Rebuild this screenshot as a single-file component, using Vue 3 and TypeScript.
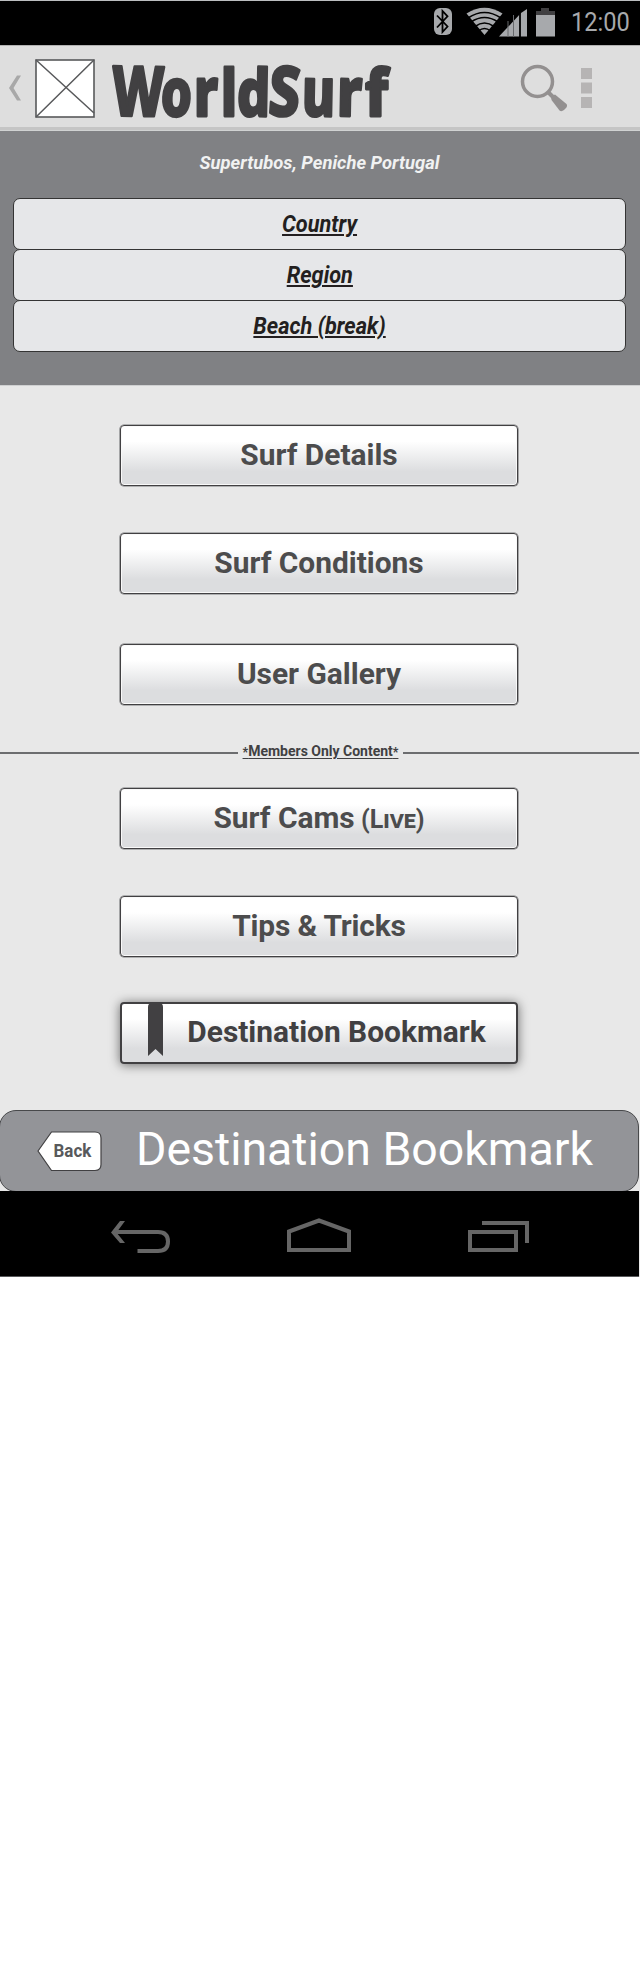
<script setup lang="ts">
interface Action { label: string; note?: string; cls: string; mark?: boolean }

const filters = ['Country', 'Region', 'Beach (break)']
const publicActions: Action[] = [
  { label: 'Surf Details', cls: 'details' },
  { label: 'Surf Conditions', cls: 'conditions' },
  { label: 'User Gallery', cls: 'gallery' },
]
const memberActions: Action[] = [
  { label: 'Surf Cams', note: '(Live)', cls: 'cams' },
  { label: 'Tips & Tricks', cls: 'tips' },
  { label: 'Destination Bookmark', cls: 'bookmark', mark: true },
]
// Letters of the wordmark: glyph, left edge, width, size, tilt
const wordmark = [
  { c: 'W', x: 112, w: 52, s: 69, r: 1 },
  { c: 'o', x: 161, w: 31, s: 66, r: 3 },
  { c: 'r', x: 194, w: 24, s: 67, r: 0 },
  { c: 'l', x: 221, w: 16, s: 65, r: 0 },
  { c: 'd', x: 237, w: 33, s: 65, r: 1 },
  { c: 'S', x: 269, w: 31, s: 69, r: 4 },
  { c: 'u', x: 302, w: 33, s: 67, r: 1 },
  { c: 'r', x: 337, w: 25, s: 67, r: 1 },
  { c: 'f', x: 365, w: 23, s: 65, r: 0 },
]
</script>

<template>
  <main class="screen">
    <header class="status">
      <svg class="status-icons" viewBox="0 0 160 44" width="160" height="44">
        <rect x="4" y="7" width="18" height="27" rx="6" fill="#a7a9ac" />
        <path d="M7 14.500 17.500 25.500 12.500 31V10l5 5.300L7 26.500" fill="none" stroke="#000" stroke-width="1.800" />
        <path d="M36.500 12.500Q54.500 1 72.500 12.500L54.500 34Z" fill="#a7a9ac" />
        <g fill="none" stroke="#000" stroke-width="1.600">
          <path d="M38 17Q54.500 6 71 17M41 21Q54.500 12 68 21M45 25.500Q54.500 18.500 64 25.500M48.500 30Q54.500 25 60.500 30" />
        </g>
        <path d="M69 35.500 91 12 97 8V35.500Z" fill="#a7a9ac" />
        <path d="M90 11v25" stroke="#000" stroke-width="1.800" />
        <path d="M78 20v16M83.500 14v22" stroke="#66686b" stroke-width="1" />
        <path d="M106 14V10h5V7h8v3h6v4z" fill="#414042" />
        <rect x="106" y="14" width="19" height="21.500" fill="#a7a9ac" />
      </svg>
      <span class="clock">12:00</span>
    </header>

    <section class="appbar">
      <svg width="640" height="85" viewBox="0 45 640 85">
        <path d="M21 75.500H17L9 88l8 12.500h4L13.500 88Z" fill="#a8a8a8" />
        <rect x="36" y="60" width="58" height="57" fill="#fff" stroke="#58595b" stroke-width="1.600" />
        <path d="m36 60 58 53M94 60 36 117" stroke="#58595b" stroke-width="1.500" />
        <g class="wordmark">
          <text v-for="l in wordmark" :key="l.x" :x="l.x" y="116" :font-size="l.s" :textLength="l.w" lengthAdjust="spacingAndGlyphs" :transform="`rotate(${l.r} ${l.x + l.w / 2} 95)`">{{ l.c }}</text>
        </g>
        <circle cx="537.500" cy="81.500" r="15" fill="none" stroke="#939090" stroke-width="3.500" />
        <path d="m548 92 6 6" stroke="#939090" stroke-width="4" />
        <path d="M551 96.500 555 94.500 566.500 104q1.500 2-1 4.500l-1.500 1.500q-2.500 2-4.500.5L551.500 100Z" fill="#939090" />
        <path d="M581 68h11v11h-11zM581 82.500h11v11h-11zM581 97h11v11h-11z" fill="#b6b4b4" />
      </svg>
    </section>

    <section class="location">
      <p class="place"><span>Supertubos, Peniche Portugal</span></p>
      <div class="filters">
        <button v-for="f in filters" :key="f" class="filter"><span>{{ f }}</span></button>
      </div>
    </section>

    <section class="actions">
      <button v-for="a in publicActions" :key="a.label" class="action" :class="'b-' + a.cls"><span class="label" :class="a.cls">{{ a.label }}</span></button>
      <div class="members"><i class="rule left"></i><span class="members-text"><b>*</b>Members Only Content<b>*</b></span><i class="rule"></i></div>
      <button v-for="a in memberActions" :key="a.label" class="action" :class="'b-' + a.cls">
        <svg v-if="a.mark" class="ribbon" width="15" height="53" viewBox="0 0 15 53"><path d="M0 53V4Q0 0 4 0h7q4 0 4 4v49L7.500 46Z" fill="#414042" /></svg>
        <span class="label" :class="a.cls">{{ a.label }}<small v-if="a.note">&nbsp;{{ a.note }}</small></span>
      </button>
    </section>

    <footer class="titlebar">
      <button class="back">
        <svg width="65" height="41" viewBox="0 0 65 41"><path d="M1 20 14.500 1H58q6 0 6 6v26.500q0 6-6 6H14.500Z" fill="#fff" stroke="#414042" stroke-width="1.200" /></svg>
        <span class="back-text">Back</span>
      </button>
      <h1>Destination Bookmark</h1>
    </footer>

    <nav class="navbar">
      <svg width="640" height="85" viewBox="0 1191 640 85" fill="none" stroke="#666" stroke-width="4">
        <path d="M114 1232h44q10 0 10 9.500t-10 9.500h-20.500" />
        <path d="M125 1221h-5l-9 11.500 9 10.500h5l-8.500-10.500Z" fill="#666" stroke="none" />
        <path d="M289 1250V1231.500L319 1220.500 349 1231.500V1250Z" />
        <path d="M470 1232h46v18h-46zM482 1223h45v20" />
      </svg>
    </nav>
  </main>
</template>

<style>
body { margin: 0; background: #fff; }
</style>

<style scoped>
* { box-sizing: border-box; }
.screen { width: 640px; font-family: Roboto, "Liberation Sans", sans-serif; background: #e8e8e8; }
svg { display: block; flex: none; }
button { font: inherit; padding: 0; margin: 0; }
span { display: inline-block; white-space: nowrap; }
.status { height: 45px; background: #000; border-top: 1px solid #bcbec0; display: flex; padding-left: 430px; color: #a7a9ac; }
.clock { font-size: 25px; line-height: 44px; margin-left: -19px; transform-origin: 0 50%; transform: scaleX(.945); }
.appbar { height: 86px; background: #dedede; box-shadow: inset 0 1px #b2b2b2, inset 0 -1px #d0d2d2, inset 0 -4px #c5c5c5; }
.appbar svg { overflow: visible; }
.wordmark { font-family: "Noto Sans", sans-serif; font-weight: 800; fill: #414042; stroke: #414042; stroke-width: 2.800; stroke-linejoin: round; }
.location { height: 255px; background: #808184; border-bottom: 1px solid #cfd0d1; padding: 20px 14px 0 13px; }
.place { margin: 0; height: 47px; text-align: center; color: #f1f2f2; font-size: 18.400px; font-weight: 700; font-style: italic; line-height: 24px; }
.filters { display: flex; flex-direction: column; }
.filter { height: 52px; margin-bottom: -1px; border: 1px solid #343434; border-radius: 7px; background: #e6e7e9; color: #231f20; font-size: 23.500px; font-weight: 700; font-style: italic; line-height: 51px; }
.filter span { text-decoration: underline; text-decoration-thickness: 1.500px; text-underline-offset: 2px; transform: scaleX(.925); }
.actions { height: 724px; padding-top: 39px; display: flex; flex-direction: column; align-items: center; padding-right: 2px; }
.action { position: relative; flex: none; width: 398px; height: 61px; margin-bottom: 1px; border: 1px solid #414042; border-radius: 4px; background: linear-gradient(#fff 26%, #dcdddf 77%); box-shadow: inset 0 0 0 1px #f9f9f9, 0 0 0 .6px #77787a; color: #4c4c4d; font-size: 29.900px; font-weight: 700; line-height: 57px; display: flex; justify-content: center; }
.b-conditions { margin-top: 46px; }
.b-gallery { margin-top: 49px; }
.members { height: 82px; flex: none; width: 640px; margin-right: -2px; display: flex; align-items: flex-start; justify-content: space-between; padding-right: 1px; }
.rule { width: 236px; height: 2px; background: #6c6d6f; margin-top: 46px; }
.rule.left { flex: 0 0 238px; }
.members-text { font-size: 14px; line-height: 20px; font-weight: 700; color: #414042; margin-top: 35px; text-decoration: underline; text-decoration-thickness: 1px; text-underline-offset: 2px; }
.members-text b { font-size: 12px; }
.label.tips { letter-spacing: -.15px; }
.b-tips { margin-top: 46px; }
.b-bookmark { margin-top: 44px; height: 62px; margin-bottom: 0; border: 2px solid #414042; box-shadow: 0 1px 11px rgba(0,0,0,.55); color: #414042; line-height: 56px; }
.ribbon { position: absolute; left: 26px; top: -1px; }
.label.bookmark { padding-left: 35px; }
small { font-size: 25px; font-variant: small-caps; }
.titlebar { height: 82px; margin: 0 1px 0 -1px; border: 1.500px solid #48494b; border-radius: 17px; background: #939498; display: flex; }
.back { width: 65px; height: 41px; margin: 20px 0 0 37px; border: 0; background: none; display: grid; flex: none; }
.back > * { grid-area: 1 / 1; }
.back-text { font-size: 17.500px; line-height: 40px; font-weight: 700; color: #58595b; padding-left: 6px; transform: scaleX(.97); }
h1 { margin: 0 0 0 34px; font-size: 46.500px; font-weight: 400; line-height: 76px; color: #fff; white-space: nowrap; transform-origin: 0 50%; transform: scaleX(.998); }
.navbar { height: 86px; margin-right: 1px; margin-top: -1px; background: #000; overflow: hidden; border-bottom: 1px solid #58595b; }
</style>
